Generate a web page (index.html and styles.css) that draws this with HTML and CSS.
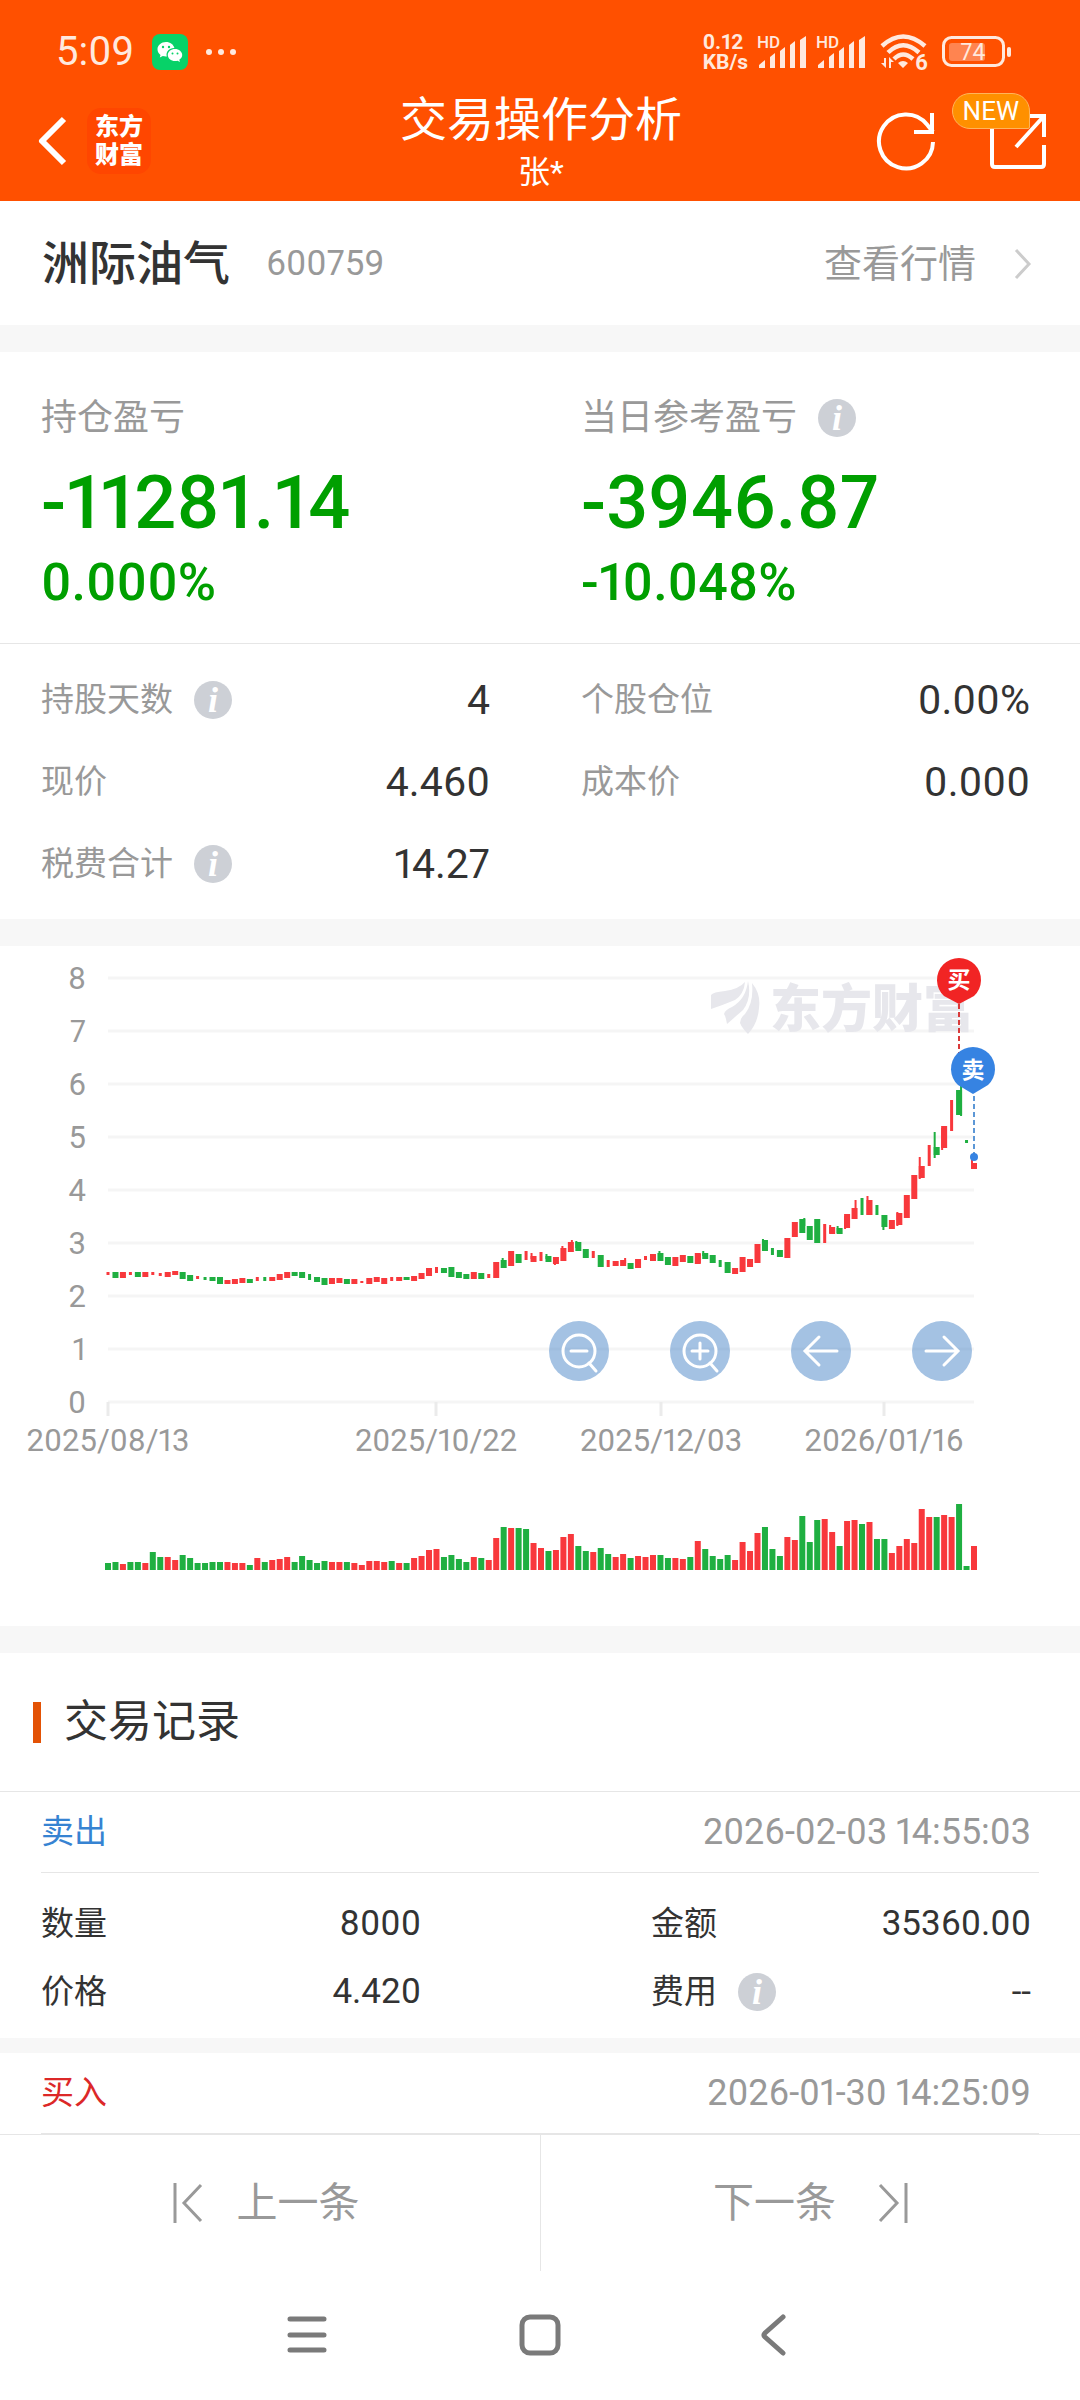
FILE: index.html
```html
<!DOCTYPE html>
<html lang="zh-CN">
<head>
    <meta charset="UTF-8">
    <meta name="viewport" content="width=device-width, initial-scale=1.0">
    <title>交易操作分析</title>
    <link rel="stylesheet" href="styles.css">
</head>
<body>
    <header class="header">
        <div class="status-bar">
            <div class="status-left">
                <span class="clock">5:09</span>
                <svg class="wechat" viewBox="0 0 36 36" aria-hidden="true">
                    <rect width="36" height="36" rx="8" fill="#07d268"/>
                    <path fill="#fff" d="M14 8c-4.800 0-8.500 3.300-8.500 7.300 0 2.300 1.200 4.200 3 5.600l-.7 2.700 3-1.600c1 .3 2 .5 3.200.5h.8c-1.300-4.500 2.500-8.600 7.600-8.400C21.600 10.500 18.200 8 14 8z"/>
                    <path fill="#fff" d="M23 15c-4 0-7.200 2.700-7.200 6s3.200 6.100 7.200 6.100c.9 0 1.800-.2 2.600-.4l2.300 1.300-.6-2.200c1.700-1.100 2.900-2.800 2.900-4.800 0-3.300-3.200-6-7.200-6z"/>
                    <g fill="#07d268"><circle cx="11" cy="13" r="1.200"/><circle cx="17" cy="13" r="1.200"/><circle cx="20.500" cy="19.500" r="1"/><circle cx="25.500" cy="19.500" r="1"/></g>
                </svg>
                <svg class="dots" viewBox="0 0 32 8" aria-hidden="true" fill="#ffe9de"><circle cx="4" cy="4" r="3"/><circle cx="16" cy="4" r="3"/><circle cx="28" cy="4" r="3"/></svg>
            </div>
            <div class="status-right">
                <div class="speed">0.12<br>KB/s</div>
                <svg class="signal" viewBox="0 0 50 36" aria-hidden="true" fill="#ffe9de">
                    <text x="0" y="14" class="hd">HD</text>
                    <path d="M2 34v-3l6-5v8zM13 34V23l5-4v15zM23 34V17l5-4v21zM33 34V11l5-4v27zM43 34V6l6-4v32z"/>
                </svg>
                <svg class="signal" viewBox="0 0 50 36" aria-hidden="true" fill="#ffe9de">
                    <text x="0" y="14" class="hd">HD</text>
                    <path d="M2 34v-3l6-5v8zM13 34V23l5-4v15zM23 34V17l5-4v21zM33 34V11l5-4v27zM43 34V6l6-4v32z"/>
                </svg>
                <svg class="wifi" viewBox="0 0 48 38" aria-hidden="true">
                    <g fill="none" stroke="#ffe9de" stroke-width="4.500">
                        <path d="M2 13Q23-6 45 13"/>
                        <path d="M8 19.500Q23 5 39 19.500"/>
                        <path d="M14 26Q23 17 33 26"/>
                    </g>
                    <path fill="#ffe9de" d="M23 35l-5-5q5-4 10 0zM4 25h2v10l-5-5h3zM9 35V24l5 5h-3v6z"/>
                    <text x="35" y="37" class="wifi-num">6</text>
                </svg>
                <svg class="battery" viewBox="0 0 70 32" aria-hidden="true">
                    <rect x="1.500" y="1.500" width="60" height="28" rx="8" fill="none" stroke="#ffe9de" stroke-width="3"/>
                    <rect x="7" y="7" width="36" height="18" rx="3" fill="#ff8450"/>
                    <rect x="65" y="11" width="4" height="10" rx="2" fill="#ffe9de"/>
                    <text x="31" y="24" text-anchor="middle" class="battery-num">74</text>
                </svg>
            </div>
        </div>
        <div class="nav-bar">
            <div class="nav-side">
                <button class="icon-btn" aria-label="返回">
                    <svg class="back-icon" viewBox="0 0 34 52"><path d="M30 4L8 26l22 22" fill="none" stroke="#fff" stroke-width="6" stroke-linejoin="round"/></svg>
                </button>
                <a class="brand" href="#">东方<br>财富</a>
            </div>
            <div class="nav-title">
                <h1>交易操作分析</h1>
                <p>张*</p>
            </div>
            <div class="nav-side nav-actions">
                <button class="icon-btn" aria-label="刷新">
                    <svg class="nav-icon" viewBox="0 0 60 60" fill="none" stroke="#fff" stroke-width="4">
                        <path d="M57 31A27 27 0 1 1 51 13.500L57 21"/>
                        <path d="M56 2v19H38"/>
                    </svg>
                </button>
                <button class="icon-btn share" aria-label="分享">
                    <svg class="nav-icon" viewBox="0 0 60 60" fill="none" stroke="#fff" stroke-width="4">
                        <path d="M36 5H4v48q0 3 3 3h46q3 0 3-3V34M28 36L56 5M38 5h18v21"/>
                    </svg>
                    <span class="badge">NEW</span>
                </button>
            </div>
        </div>
    </header>

    <main>
        <section class="stock">
            <h2>洲际油气</h2>
            <span class="code">600759</span>
            <a class="quote-link" href="#">查看行情
                <svg class="chevron" viewBox="0 0 18 32"><path d="M2 2l13 14L2 30" fill="none" stroke="#ccc" stroke-width="3"/></svg>
            </a>
        </section>

        <section class="profit">
            <div>
                <h3>持仓盈亏</h3>
                <p class="amount">-11281.14</p>
                <p class="percent">0.000%</p>
            </div>
            <div>
                <h3>当日参考盈亏<button class="info" aria-label="说明">i</button></h3>
                <p class="amount">-3946.87</p>
                <p class="percent">-10.048%</p>
            </div>
        </section>

        <dl class="stats">
            <div><dt>持股天数<button class="info" aria-label="说明">i</button></dt><dd>4</dd></div>
            <div><dt>个股仓位</dt><dd>0.00%</dd></div>
            <div><dt>现价</dt><dd>4.460</dd></div>
            <div><dt>成本价</dt><dd>0.000</dd></div>
            <div><dt>税费合计<button class="info" aria-label="说明">i</button></dt><dd>14.27</dd></div>
        </dl>

        <section class="chart">
            <svg id="kline" viewBox="0 946 1080 680" role="img" aria-label="K线图">
                <g id="grid"></g>
                <g class="watermark">
                    <path d="M711 995q2-3 14-4 14-2 20-9-1 12-10 18-12 5-24 9zM748 981q4 17-5 29l-16 14q-1-7-3-10 1-4 8-7 14-8 16-26zM752 983q9 11 7 25-1 15-11 26-6-6-8-11 0-5 5-9 9-12 7-31z"/>
                    <text x="770" y="1027">东方财富</text>
                </g>
                <g id="candles"></g>
                <g id="volumes"></g>
                <g class="pin pin-buy">
                    <path class="pin-line" d="M959 1004V1062"/>
                    <path class="pin-shape" d="M959 1004l-15-8a22 22 0 1 1 30 0z"/>
                    <text x="959" y="988">买</text>
                </g>
                <g class="pin pin-sell">
                    <path class="pin-line" d="M974 1096V1156"/>
                    <circle class="pin-shape" cx="974" cy="1157" r="4"/>
                    <path class="pin-shape" d="M973 1094l-15-9a22 22 0 1 1 30 0z"/>
                    <text x="973" y="1078">卖</text>
                </g>
            </svg>
            <div class="chart-tools">
                <button aria-label="缩小"><svg viewBox="0 0 60 60"><circle cx="30" cy="30" r="16"/><path d="M22 30h16M40 42l7 8"/></svg></button>
                <button aria-label="放大"><svg viewBox="0 0 60 60"><circle cx="30" cy="30" r="16"/><path d="M22 30h16M30 22v16M40 42l7 8"/></svg></button>
                <button aria-label="左移"><svg viewBox="0 0 60 60"><path d="M46 30H15M28 16L14 30l14 14"/></svg></button>
                <button aria-label="右移"><svg viewBox="0 0 60 60"><path d="M14 30h31M32 16l14 14-14 14"/></svg></button>
            </div>
        </section>

        <section class="records">
            <h2 class="section-title">交易记录</h2>
            <article class="record">
                <header class="record-head"><span class="sell">卖出</span><time>2026-02-03 14:55:03</time></header>
                <dl class="record-body">
                    <div><dt>数量</dt><dd>8000</dd></div>
                    <div><dt>金额</dt><dd>35360.00</dd></div>
                    <div><dt>价格</dt><dd>4.420</dd></div>
                    <div><dt>费用<button class="info" aria-label="说明">i</button></dt><dd>--</dd></div>
                </dl>
            </article>
            <article class="record">
                <header class="record-head"><span class="buy">买入</span><time>2026-01-30 14:25:09</time></header>
            </article>
        </section>
    </main>

    <nav class="pager">
        <button>
            <svg viewBox="0 0 30 40"><path d="M2 0v40M28 2L11 20l17 18"/></svg>
            上一条
        </button>
        <button>
            下一条
            <svg viewBox="0 0 30 40"><path d="M28 0v40M2 2l17 18L2 38"/></svg>
        </button>
    </nav>

    <nav class="system-nav">
        <button aria-label="最近任务"><svg viewBox="0 0 44 44"><path d="M5 6h34M5 22h34M5 37h34"/></svg></button>
        <button aria-label="主屏幕"><svg viewBox="0 0 44 44"><rect x="4" y="4" width="36" height="36" rx="8"/></svg></button>
        <button aria-label="返回"><svg viewBox="0 0 44 44"><path d="M32 4L14 20q-2 2 0 4l18 16"/></svg></button>
    </nav>

    <script src="chart.js"></script>
</body>
</html>
```
FILE: styles.css
```css
/* Global Styles */
* {
    box-sizing: border-box;
}

body {
    font-family: Roboto, "Noto Sans CJK SC", sans-serif;
    font-variant-numeric: proportional-nums;
    margin: 0;
    background-color: #fff;
    color: #333;
}

h1, h2, h3, p, dl, dd {
    margin: 0;
    font-weight: 400;
}

button {
    font-family: inherit;
    background: none;
    border: none;
    padding: 0;
    cursor: pointer;
}

a {
    text-decoration: none;
}

svg {
    display: block;
}

/* Header */
.header {
    background-color: #ff5000;
    color: #fff;
}

.status-bar {
    display: flex;
    align-items: center;
    justify-content: space-between;
    height: 88px;
    padding: 16px 68px 0 56px;
    color: #ffe9de;
}

.status-left, .status-right {
    display: flex;
    align-items: center;
}

.clock {
    font-size: 40px;
    line-height: 40px;
    margin-right: 18px;
}

.wechat {
    width: 36px;
    height: 36px;
    margin-right: 17px;
}

.dots {
    width: 32px;
    height: 8px;
}

.status-right {
    gap: 9px;
}

.speed {
    font-size: 21px;
    font-weight: 700;
    line-height: 20px;
}

.signal {
    width: 50px;
    height: 36px;
    overflow: visible;
}

.hd {
    font-size: 17px;
    font-weight: 500;
}

.wifi {
    width: 48px;
    height: 38px;
    margin: 0 5px;
    overflow: visible;
}

.wifi-num {
    font-size: 22px;
    font-weight: 700;
    fill: #ffe9de;
}

.battery {
    width: 70px;
    height: 32px;
}

.battery-num {
    font-size: 23px;
    fill: #ffe9de;
}

.nav-bar {
    display: flex;
    align-items: center;
    height: 113px;
    padding: 0 32px 8px 34px;
}

.nav-side {
    flex: 1;
    display: flex;
    align-items: center;
}

.back-icon {
    width: 34px;
    height: 52px;
}

.brand {
    margin-left: 19px;
    padding: 5px 8px;
    border-radius: 14px;
    background-color: #ff4600;
    color: #fff;
    font-size: 24px;
    font-weight: 900;
    line-height: 28px;
}

.nav-title {
    padding-top: 5px;
    text-align: center;
}

.nav-title h1 {
    font-size: 47px;
    line-height: 58px;
}

.nav-title p {
    font-size: 32px;
    line-height: 46px;
}

.nav-actions {
    justify-content: flex-end;
    gap: 52px;
}

.nav-icon {
    width: 60px;
    height: 60px;
}

.share {
    position: relative;
}

.badge {
    position: absolute;
    right: 18px;
    top: -18px;
    padding: 0 10px;
    border: 1px solid #ffb45c;
    border-radius: 18px 18px 2px 18px;
    background-color: #ff9000;
    color: #fff;
    font-size: 26px;
    line-height: 34px;
}

/* Stock name */
.stock {
    display: flex;
    align-items: center;
    height: 124px;
    padding: 2px 48px 0 42px;
    line-height: 60px;
}

.stock h2 {
    font-size: 47px;
    font-weight: 500;
}

.code {
    margin-left: 36px;
    font-size: 35px;
    color: #999;
}

.quote-link {
    display: flex;
    align-items: center;
    gap: 38px;
    margin-left: auto;
    font-size: 38px;
    color: #999;
}

.chevron {
    width: 18px;
    height: 32px;
}

/* Profit */
.profit {
    display: grid;
    grid-template-columns: 1fr 1fr;
    padding: 38px 0 30px;
    border-top: 27px solid #f7f7f7;
    border-bottom: 1px solid #e6e6e6;
}

.profit > div {
    padding-left: 41px;
}

.profit h3 {
    display: flex;
    align-items: center;
    font-size: 36px;
    line-height: 56px;
    color: #999;
}

.amount {
    margin-top: 7px;
    font-size: 74px;
    font-weight: 500;
    line-height: 100px;
    color: #009f00;
}

.percent {
    font-size: 52px;
    font-weight: 500;
    line-height: 60px;
    color: #009f00;
}

.info {
    width: 38px;
    height: 38px;
    margin-left: 21px;
    border-radius: 50%;
    background-color: #cdd0d6;
    color: #fff;
    font-family: "Liberation Serif", serif;
    font-size: 36px;
    font-style: italic;
    font-weight: 700;
    line-height: 36px;
}

/* Position stats */
.stats {
    display: grid;
    grid-template-columns: 1fr 1fr;
    padding: 15px 0 14px;
}

.stats > div {
    display: flex;
    align-items: center;
    justify-content: space-between;
    padding: 0 50px 0 41px;
    line-height: 82px;
}

.stats dt {
    display: flex;
    align-items: center;
    font-size: 33px;
    color: #999;
}

.stats dd {
    font-size: 41px;
}

/* Chart */
.chart {
    position: relative;
    border-top: 27px solid #f7f7f7;
    border-bottom: 27px solid #f7f7f7;
}

#kline {
    width: 100%;
    height: auto;
}

.grid-line {
    stroke: #f5f5f5;
    stroke-width: 3;
}

.tick {
    stroke: #ebebeb;
    stroke-width: 3;
}

.axis-label {
    fill: #999;
    font-size: 31px;
}

.up {
    fill: #f8383c;
}

.down {
    fill: #1faf41;
}

.watermark {
    fill: #e7e7ec;
    font-size: 51px;
    font-weight: 900;
}

.pin text {
    fill: #fff;
    font-size: 23px;
    font-weight: 700;
    text-anchor: middle;
}

.pin-line {
    stroke-width: 2;
    stroke-dasharray: 5 3;
}

.pin-buy .pin-shape {
    fill: #f12424;
}

.pin-buy .pin-line {
    stroke: #d93a3a;
}

.pin-sell .pin-shape {
    fill: #3683e2;
}

.pin-sell .pin-line {
    stroke: #5c97d6;
}

.chart-tools {
    position: absolute;
    right: 10%;
    bottom: 36%;
    display: flex;
    gap: 61px;
}

.chart-tools button {
    width: 60px;
    height: 60px;
    border-radius: 50%;
    background-color: rgba(73, 134, 200, 0.5);
}

.chart-tools svg {
    fill: none;
    stroke: #fff;
    stroke-width: 3;
    stroke-linecap: round;
}

/* Trade records */
.section-title {
    display: flex;
    align-items: center;
    gap: 23px;
    height: 138px;
    padding-left: 33px;
    font-size: 44px;
    line-height: 60px;
}

.section-title::before {
    content: "";
    width: 8px;
    height: 41px;
    background-color: #e35205;
}

.record {
    border-top: 1px solid #e6e6e6;
}

.record + .record {
    border-top: 15px solid #f7f7f7;
}

.record-head {
    display: flex;
    justify-content: space-between;
    margin: 0 41px;
    padding-right: 8px;
    border-bottom: 1px solid #e6e6e6;
    font-size: 33px;
    line-height: 80px;
}

.record-head time {
    font-size: 36px;
    color: #999;
}

.sell {
    color: #3683d2;
}

.buy {
    color: #dc2828;
}

.record-body {
    display: grid;
    grid-template-columns: 1fr 1fr;
    column-gap: 230px;
    padding: 17px 49px 12px 41px;
    line-height: 68px;
}

.record-body > div {
    display: flex;
    justify-content: space-between;
}

.record-body dt {
    display: flex;
    align-items: center;
    font-size: 33px;
}

.record-body dd {
    font-size: 35px;
}

/* Bottom bars */
.pager {
    display: grid;
    grid-template-columns: 1fr 1fr;
    border-top: 1px solid #e6e6e6;
}

.pager button {
    display: flex;
    align-items: center;
    justify-content: center;
    gap: 34px;
    height: 136px;
    padding-right: 8px;
    font-size: 41px;
    line-height: 60px;
    color: #999;
}

.pager button + button {
    gap: 42px;
    padding-right: 0;
    border-left: 1px solid #e6e6e6;
}

.pager svg {
    width: 30px;
    height: 40px;
    fill: none;
    stroke: #999;
    stroke-width: 3;
}

.system-nav {
    display: flex;
    justify-content: center;
    gap: 189px;
    padding: 42px 0;
}

.system-nav svg {
    width: 44px;
    height: 44px;
    fill: none;
    stroke: #7a7a7a;
    stroke-width: 5;
    stroke-linecap: round;
}
```
FILE: chart.js
```javascript
const NS = 'http://www.w3.org/2000/svg';
const LEFT = 108;
const RIGHT = 974;
const ZERO_Y = 1402;
const UNIT = 53;
const VOLUME_BASE = 1570;

// r = up, g = down, then top and bottom; "n" marks a narrow bar
const candles = `r1272-1274n g1272-1277 r1272-1277 r1272-1274n g1272-1276 r1272-1276 r1272-1274n r1273-1275n r1272-1276 r1271-1274
g1272-1278 g1275-1280 r1276-1278n g1277-1279n g1277-1280 g1277-1283 r1280-1283 r1279-1283 r1278-1282 g1279-1282
r1277-1280n g1277-1280n r1277-1280 r1274-1279 r1272-1277 g1272-1275 g1272-1277 g1274-1279n g1277-1281 g1278-1284
r1278-1283 r1278-1282 g1279-1283 r1279-1283 r1281-1282n r1278-1283 r1277-1281 r1278-1283 r1277-1280n r1277-1280
g1277-1279 r1276-1280 r1273-1278 r1268-1275 r1267-1272n g1268-1272 g1267-1276 g1272-1277 g1274-1278 r1272-1278
g1273-1278 r1274-1277n r1262-1277 g1260-1267 r1251-1265 g1254-1262 r1251-1259n r1256-1261 r1252-1260n g1256-1261
r1257-1263 r1248-1260 r1242-1251 g1242-1250 g1249-1257 r1251-1257n g1255-1266 r1260-1266n r1261-1265 r1260-1265
g1263-1268 r1259-1267 r1256-1259n r1254-1260 g1253-1260 g1257-1264 r1257-1265 r1255-1261 g1256-1262 r1253-1263
g1253-1258 g1255-1262 g1260-1266n g1262-1272 r1268-1273 r1257-1271 r1259-1266 r1244-1262 g1240-1250 g1248-1254n
g1250-1256 r1238-1257 r1222-1236 g1219-1232 g1226-1239 g1219-1242 r1224-1242n r1227-1233 g1228-1233 r1214-1227
r1208-1218 g1198-1214n r1200-1214 g1205-1214n g1215-1226 r1220-1228 r1213-1224 r1195-1217 r1175-1198 r1166-1177
r1145-1165n g1147-1154 r1126-1147 r1100-1130n g1090-1114 g1140-1142n r1163-1168`.split(/\s+/);

// wicks that stick out of the body: index, x shift, top, bottom
const wicks = [
    [53, -1, 1258, 1265], [57, -2, 1253, 1259], [59, -2, 1254, 1259], [60, -1, 1258, 1265], [61, -1, 1246, 1256],
    [62, 1, 1240, 1246], [63, -2, 1241, 1248], [69, 2, 1258, 1263], [74, -1, 1251, 1258], [79, 2, 1254, 1263],
    [80, -2, 1251, 1256], [88, -2, 1239, 1246], [93, 2, 1218, 1226], [97, -2, 1225, 1233], [98, -2, 1226, 1233],
    [99, -2, 1216, 1229], [100, 1, 1200, 1214], [102, -2, 1196, 1215], [104, -1, 1216, 1230], [106, -2, 1212, 1226],
    [109, -2, 1157, 1179], [111, -2, 1132, 1158], [112, -2, 1128, 1150], [114, 2, 1083, 1116], [116, -2, 1160, 1166]
];

const volumes = `g7 g8 r6 g8 g8 r7 g18 g13 r13 r10 g15 g12 g7 g7 g8 g8 r8 r7 r7 g5
r12 g8 r10 r11 r13 g8 g14 g10 g7 g9 r8 r8 g8 r7 r5 r9 r9 r8 g9 r7
g7 r12 r14 r20 r21 g13 g15 g11 g8 r13 g12 r10 r32 g43 r42 g42 g41 r27 r22 g19
r20 r33 r36 g24 g19 r18 g22 g16 r13 r16 g12 r14 r13 r15 g15 g12 r12 r11 g13 r29
g21 g14 g11 g15 r10 r28 r19 r37 g43 g21 g14 r33 r30 g54 g28 g50 r51 r38 g24 r49
r50 g46 r48 g31 g31 r17 r24 r31 r27 r61 r53 g53 r55 r53 g66 g4 r24`.split(/\s+/);

const dates = [[108, '2025/08/13'], [436, '2025/10/22'], [661, '2025/12/03'], [884, '2026/01/16']];

function add(parent, name, attrs, text) {
    const el = document.createElementNS(NS, name);
    for (const key in attrs) el.setAttribute(key, attrs[key]);
    if (text !== undefined) el.textContent = text;
    document.getElementById(parent).appendChild(el);
}

for (let v = 0; v <= 8; v++) {
    const y = ZERO_Y - v * UNIT;
    add('grid', 'line', { class: 'grid-line', x1: LEFT, x2: RIGHT, y1: y, y2: y });
    add('grid', 'text', { class: 'axis-label', x: 86, y: y + 11, 'text-anchor': 'end' }, v);
}
dates.forEach(([x, label]) => {
    add('grid', 'line', { class: 'tick', x1: x, x2: x, y1: ZERO_Y, y2: ZERO_Y + 14 });
    add('grid', 'text', { class: 'axis-label', x: x, y: 1451, 'text-anchor': 'middle' }, label);
});

const step = (RIGHT - LEFT) / (candles.length - 1);
const colorOf = item => item[0] === 'r' ? 'up' : 'down';

candles.forEach((item, i) => {
    const [top, bottom] = item.slice(1).split('-').map(parseFloat);
    const w = item.endsWith('n') ? 3 : 6;
    add('candles', 'rect', { class: colorOf(item), x: LEFT + i * step - w / 2, y: top, width: w, height: bottom - top + 1 });
});
wicks.forEach(([i, dx, top, bottom]) => {
    add('candles', 'rect', { class: colorOf(candles[i]), x: LEFT + i * step + dx - 1, y: top, width: 2, height: bottom - top });
});
volumes.forEach((item, i) => {
    const h = Number(item.slice(1));
    add('volumes', 'rect', { class: colorOf(item), x: LEFT + i * step - 3, y: VOLUME_BASE - h, width: 6, height: h });
});
```
